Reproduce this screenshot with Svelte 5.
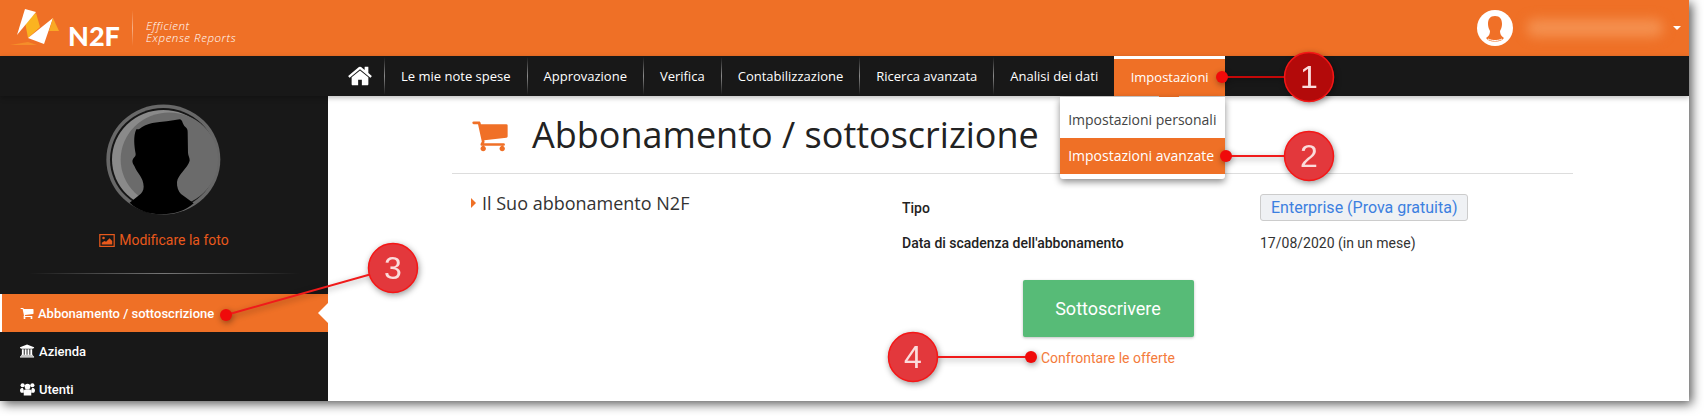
<script>
  const navItems = ['Le mie note spese', 'Approvazione', 'Verifica', 'Contabilizzazione', 'Ricerca avanzata', 'Analisi dei dati'];

  // callouts drawn over the screenshot: line start (dot), line end, badge centre
  const callouts = [
    { n: 1, x1: 1222, y1: 77, cx: 1309, cy: 77, fill: '#b30a0a' },
    { n: 2, x1: 1226, y1: 156, cx: 1309, cy: 156, fill: '#e3383c' },
    { n: 3, x1: 226, y1: 315, cx: 393, cy: 268, fill: '#e3383c' },
    { n: 4, x1: 1031, y1: 357, cx: 913, cy: 357, fill: '#e3383c' }
  ];

  const cart = 'M704 1536q0 52-38 90t-90 38-90-38-38-90 38-90 90-38 90 38 38 90zm896 0q0 52-38 90t-90 38-90-38-38-90 38-90 90-38 90 38 38 90zm128-1088v512q0 24-16.500 42.500t-40.500 21.500l-1044 122q13 60 13 70 0 16-24 64h920q26 0 45 19t19 45-19 45-45 19h-1024q-26 0-45-19t-19-45q0-11 8-31.500t16-36 21.500-40 15.500-29.500l-177-823h-204q-26 0-45-19t-19-45 19-45 45-19h256q16 0 28.500 6.500t19.500 15.500 13 24.500 8 26 5.500 29.500 4.500 26h1201q26 0 45 19t19 45z';
</script>

<div class="shot">
  <div class="window">
    <header class="top">
      <div class="logo">
        <svg class="mark" viewBox="0 0 66 56" width="66" height="56">
          <path d="M10 45l18-3 9 3z" fill="#f58d2a"/>
          <path d="M25 22l11-9 4 14-12 11z" fill="#fbb320"/>
          <path d="M25 9l11 3-19 23z" fill="#fff"/>
          <path d="M53 18l-9 26-16-6z" fill="#fff"/>
          <path d="M53 18l6 13H49z" fill="#f9a825"/>
        </svg>
        <span class="brand">N2F</span>
        <span class="logo-sep"></span>
        <span class="tagline">Efficient<br/>Expense Reports</span>
      </div>
      <div class="user">
        <svg class="user-pic" viewBox="0 0 36 36" width="36" height="36">
          <circle cx="18" cy="18" r="18" fill="#fff"/>
          <path d="M18 6c-5 0-7 3-7 8 0 3 1 5 2 7 0 3-1 5-4 7l2 2c4 2 10 2 14 0l2-2c-3-2-4-4-4-7 1-2 2-4 2-7 0-5-2-8-7-8z" fill="#f07027"/>
          <path d="M11 29c4 2 10 2 14 0" stroke="#fff" fill="none"/>
        </svg>
        <span class="blurred"></span>
        <span class="caret"></span>
      </div>
    </header>

    <nav class="nav">
      <a class="home" href="#home" aria-label="Home">
        <svg viewBox="0 0 1792 1792" width="26" height="26"><path fill="#fff" d="M1472 992v480q0 26-19 45t-45 19h-384v-384h-256v384h-384q-26 0-45-19t-19-45v-480q0-1 .5-3t.5-3l575-474 575 474q1 2 1 6zm223-69l-62 74q-8 9-21 11h-3q-13 0-21-7l-692-577-692 577q-12 8-24 7-13-2-21-11l-62-74q-8-10-7-23.500t11-21.500l719-599q32-26 76-26t76 26l244 204v-195q0-14 9-23t23-9h192q14 0 23 9t9 23v408l219 182q10 8 11 21.500t-7 23.500z"/></svg>
      </a>
      {#each navItems as item}
        <a class="nav-item" href="#item">{item}</a>
      {/each}
      <div class="nav-active">
        <span>Impostazioni</span>
        <span class="tip"></span>
        <div class="menu">
          <div class="menu-item">Impostazioni personali</div>
          <div class="menu-item on">Impostazioni avanzate</div>
        </div>
      </div>
    </nav>

    <div class="body">
      <aside class="side">
        <svg class="avatar" viewBox="0 0 420 390" width="140" height="130">
          <g transform="translate(0 7) scale(1 .965)">
            <circle cx="208" cy="190" r="171" fill="#686868"/>
            <circle cx="208" cy="190" r="160" fill="#161616"/>
            <circle cx="208" cy="190" r="154" fill="#8a8a8a"/>
            <circle cx="226" cy="190" r="146" fill="#6b6b6b"/>
          </g>
          <path d="M135 100c12-10 26-16 40-19 30-4 58-6 82-11 8 0 8 12 14 20 8 6 10 10 10 18l1 62c0 8 6 16 5 24-6 22-36 42-38 64-1 14 4 28 12 36l38 28c-46 44-146 44-192 -2l28-22c8-6 14-14 14-26 0-28-20-40-28-62-6-10-8-16-2-24 4-4 6-6 6-12-4-24-8-52 2-74z" fill="#000"/>
        </svg>
        <a class="photo" href="#photo">
          <svg viewBox="0 0 18 15" width="16" height="13">
            <rect x=".7" y=".7" width="16.600" height="13.600" fill="none" stroke="#e8591c" stroke-width="1.400"/>
            <circle cx="5" cy="4.600" r="1.500" fill="#e8591c"/>
            <path d="M3 12V10l3-2 2 1 4-4 3 3v4z" fill="#e8591c"/>
          </svg>
          Modificare la foto
        </a>
        <div class="side-rule"></div>
        <ul class="side-list">
          <li class="active">
            <svg viewBox="0 0 1792 1792" width="14" height="14"><path fill="#fff" d={cart}/></svg>
            Abbonamento / sottoscrizione
            <span class="notch"></span>
          </li>
          <li>
            <svg viewBox="0 0 2048 1792" width="15" height="14"><path fill="#fff" d="M960 0l960 384v128h-128q0 26-20.500 45t-48.500 19h-1526q-28 0-48.500-19t-20.500-45h-128v-128zm-704 640h256v768h128v-768h256v768h128v-768h256v768h128v-768h256v768h59q28 0 48.500 19t20.500 45v64h-1664v-64q0-26 20.500-45t48.500-19h59v-768zm1595 960q28 0 48.500 19t20.500 45v128h-1920v-128q0-26 20.500-45t48.500-19h1782z"/></svg>
            Azienda
          </li>
          <li>
            <svg viewBox="0 0 16 14" width="15" height="14">
              <circle cx="8" cy="4.500" r="3" fill="#fff"/>
              <circle cx="2.800" cy="3" r="2.200" fill="#fff"/>
              <circle cx="13.200" cy="3" r="2.200" fill="#fff"/>
              <path d="M0 9c0-2 1-3 2-3h1l1 2v3H1zM16 9c0-2-1-3-2-3h-1l-1 2v3h3z" fill="#fff"/>
              <path d="M4 9.500c0-1.500 1-2 2-2h4c1 0 2 .5 2 2V14H4z" fill="#fff"/>
            </svg>
            Utenti
          </li>
        </ul>
      </aside>

      <main class="main">
        <div class="title-row">
          <svg class="title-icon" viewBox="0 0 1792 1792" width="38" height="38"><path fill="#f07027" d={cart}/></svg>
          <h1>Abbonamento / sottoscrizione</h1>
        </div>
        <div class="details">
          <h2><span class="tri"></span>Il Suo abbonamento N2F</h2>
          <div class="facts">
            <div class="label">Tipo</div>
            <div><span class="plan">Enterprise (Prova gratuita)</span></div>
            <div class="label">Data di scadenza dell'abbonamento</div>
            <div class="value">17/08/2020 (in un mese)</div>
          </div>
        </div>
        <div class="actions">
          <button class="subscribe">Sottoscrivere</button>
          <a class="compare" href="#compare">Confrontare le offerte</a>
        </div>
      </main>
    </div>
  </div>

  <svg class="callouts" viewBox="0 0 1704 416" width="1704" height="416">
    {#each callouts as c}
      <g class="callout">
        <line x1={c.x1} y1={c.y1} x2={c.cx} y2={c.cy} stroke={c.n === 1 ? '#c40808' : '#f01a1a'} stroke-width="2"/>
        <circle cx={c.x1} cy={c.y1} r="6" fill="#f00a0a"/>
        <circle cx={c.cx} cy={c.cy} r="24.500" fill={c.fill} stroke="#f51616" stroke-width="1.500"/>
        <text x={c.cx} y={c.cy + 11} text-anchor="middle">{c.n}</text>
      </g>
    {/each}
  </svg>
</div>

<style>
  :global(body) {
    margin: 0;
    background: #fff;
  }

  a {
    text-decoration: none;
  }

  .shot {
    position: relative;
    width: 1704px;
    height: 416px;
    overflow: hidden;
    background: #fff;
  }

  .window {
    width: 1689px;
    height: 401px;
    overflow: hidden;
    box-shadow: 3px 3px 10px rgba(0, 0, 0, 0.65);
    display: flex;
    flex-direction: column;
    font-family: Roboto, sans-serif;
    background: #fff;
  }

  /* orange top bar */
  .top {
    height: 56px;
    flex: none;
    background: #ef7026;
    display: flex;
    justify-content: space-between;
    align-items: center;
  }

  .logo {
    display: flex;
    align-items: center;
    height: 56px;
  }

  .mark {
    flex: none;
  }

  .brand {
    font: 900 27px/1 Lato, sans-serif;
    color: #fff;
    margin: 14px 0 0 2px;
    width: 64px;
  }

  .logo-sep {
    width: 1px;
    height: 36px;
    background: linear-gradient(transparent, rgba(255, 255, 255, 0.45), transparent);
  }

  .tagline {
    font: italic 300 11.500px/12px "Open Sans", sans-serif;
    letter-spacing: 0.55px;
    color: #fff;
    margin: 8px 0 0 13px;
  }

  .user {
    display: flex;
    align-items: center;
    padding-right: 8px;
  }

  .blurred {
    width: 136px;
    height: 18px;
    margin-left: 14px;
    background: #f4904f;
    filter: blur(6px);
    border-radius: 8px;
  }

  .caret {
    width: 0;
    height: 0;
    margin-left: 10px;
    border-left: 4px solid transparent;
    border-right: 4px solid transparent;
    border-top: 4px solid #fff;
  }

  /* black nav */
  .nav {
    height: 40px;
    flex: none;
    background: #181818;
    display: flex;
    padding-left: 347px;
    position: relative;
    z-index: 2;
    box-shadow: 0 2px 5px rgba(0, 0, 0, 0.25);
    font: 13px/40px "Open Sans", sans-serif;
    color: #fff;
  }

  .home {
    width: 37px;
    display: flex;
    align-items: center;
  }

  .nav-item {
    color: #fff;
    padding: 0 16px;
    border-left: 1px solid;
    border-image: linear-gradient(transparent 5%, #8a8a8a 50%, transparent 95%) 1;
  }

  .nav-active {
    position: relative;
    width: 111px;
    background: #ef7026;
    border-top: 3px solid #fff;
    box-sizing: border-box;
    line-height: 37px;
    text-align: center;
    font-weight: 500;
  }

  .tip {
    position: absolute;
    left: 45px;
    top: 37px;
    width: 20px;
    height: 1px;
    background: #ef7026;
  }

  .menu {
    position: absolute;
    top: 38px;
    left: -54px;
    width: 165px;
    padding: 0 0 5px;
    background: #fff;
    border-radius: 0 0 3px 3px;
    box-shadow: 0 3px 7px rgba(0, 0, 0, 0.45);
    text-align: left;
    font-size: 14px;
    font-weight: 400;
    color: #444;
    z-index: 3;
  }

  .menu-item {
    height: 36px;
    line-height: 36px;
    padding-left: 8px;
  }

  .menu-item:first-child {
    height: 41px;
    line-height: 46px;
  }

  .menu-item.on {
    background: #ef7026;
    color: #fff;
  }

  .body {
    flex: 1;
    display: flex;
    min-height: 0;
  }

  /* left column */
  .side {
    width: 328px;
    flex: none;
    background: #181818;
    display: flex;
    flex-direction: column;
    align-items: center;
  }

  .avatar {
    display: block;
    flex: none;
  }

  .photo {
    margin-top: 6px;
    display: flex;
    align-items: center;
    gap: 4px;
    height: 20px;
    font-size: 14px;
    color: #e8591c;
  }

  .side-rule {
    width: 270px;
    height: 1px;
    flex: none;
    margin-top: 25px;
    background: linear-gradient(90deg, transparent, #777 50%, transparent);
  }

  .side-list {
    list-style: none;
    margin: 20px 0 0;
    padding: 0;
    width: 100%;
  }

  .side-list li {
    height: 38px;
    box-sizing: border-box;
    padding-left: 20px;
    display: flex;
    align-items: center;
    gap: 4px;
    font-size: 13px;
    font-weight: 500;
    color: #fff;
  }

  .side-list li.active {
    position: relative;
    background: #ef7026;
    border-left: 2px solid #fff;
    padding-left: 18px;
  }

  .notch {
    position: absolute;
    right: 0;
    top: 9px;
    border-top: 10px solid transparent;
    border-bottom: 10px solid transparent;
    border-right: 10px solid #fff;
  }

  /* content */
  .main {
    flex: 1;
    min-width: 0;
    padding-left: 124px;
    color: #222;
  }

  .title-row {
    width: 1121px;
    height: 78px;
    box-sizing: border-box;
    border-bottom: 1px solid #ddd;
    display: flex;
    align-items: center;
    padding-left: 19px;
  }

  .title-icon {
    flex: none;
  }

  h1 {
    margin: 0 0 0 23px;
    font: 400 36px/1 "Open Sans", sans-serif;
    color: #222;
  }

  .details {
    display: flex;
    margin-top: 16px;
  }

  h2 {
    width: 450px;
    flex: none;
    box-sizing: border-box;
    margin: 0;
    padding-left: 19px;
    display: flex;
    align-items: center;
    height: 26px;
    font: 400 18px/26px "Open Sans", sans-serif;
    color: #333;
  }

  .tri {
    margin-right: 6px;
    border-top: 5px solid transparent;
    border-bottom: 5px solid transparent;
    border-left: 5px solid #ef7026;
  }

  .facts {
    display: grid;
    grid-template-columns: 358px auto;
    grid-auto-rows: 35px;
    align-items: center;
    font-size: 14px;
  }

  .label {
    font-weight: 500;
    color: #222;
  }

  .value {
    color: #333;
  }

  .plan {
    display: inline-block;
    padding: 0 10px;
    height: 25px;
    line-height: 25px;
    background: #eff1f4;
    border: 1px solid #ccc;
    border-radius: 3px;
    font-size: 16px;
    color: #3c7fe0;
  }

  .actions {
    width: 300px;
    margin: 20px 0 0 506px;
    display: flex;
    flex-direction: column;
    align-items: center;
  }

  .subscribe {
    width: 171px;
    height: 57px;
    border: 0;
    border-radius: 2px;
    background: #57bb77;
    box-shadow: 0 1px 3px rgba(0, 0, 0, 0.25);
    color: #fff;
    font: 400 18px Roboto, sans-serif;
  }

  .compare {
    margin-top: 13px;
    font-size: 14px;
    color: #f47b3c;
  }

  /* callouts over everything */
  .callouts {
    position: absolute;
    left: 0;
    top: 0;
    z-index: 5;
    pointer-events: none;
  }

  .callout {
    filter: drop-shadow(1px 2px 3px rgba(0, 0, 0, 0.4));
  }

  .callout text {
    font: 32px "Liberation Sans", sans-serif;
    fill: #fbdcdc;
  }
</style>
